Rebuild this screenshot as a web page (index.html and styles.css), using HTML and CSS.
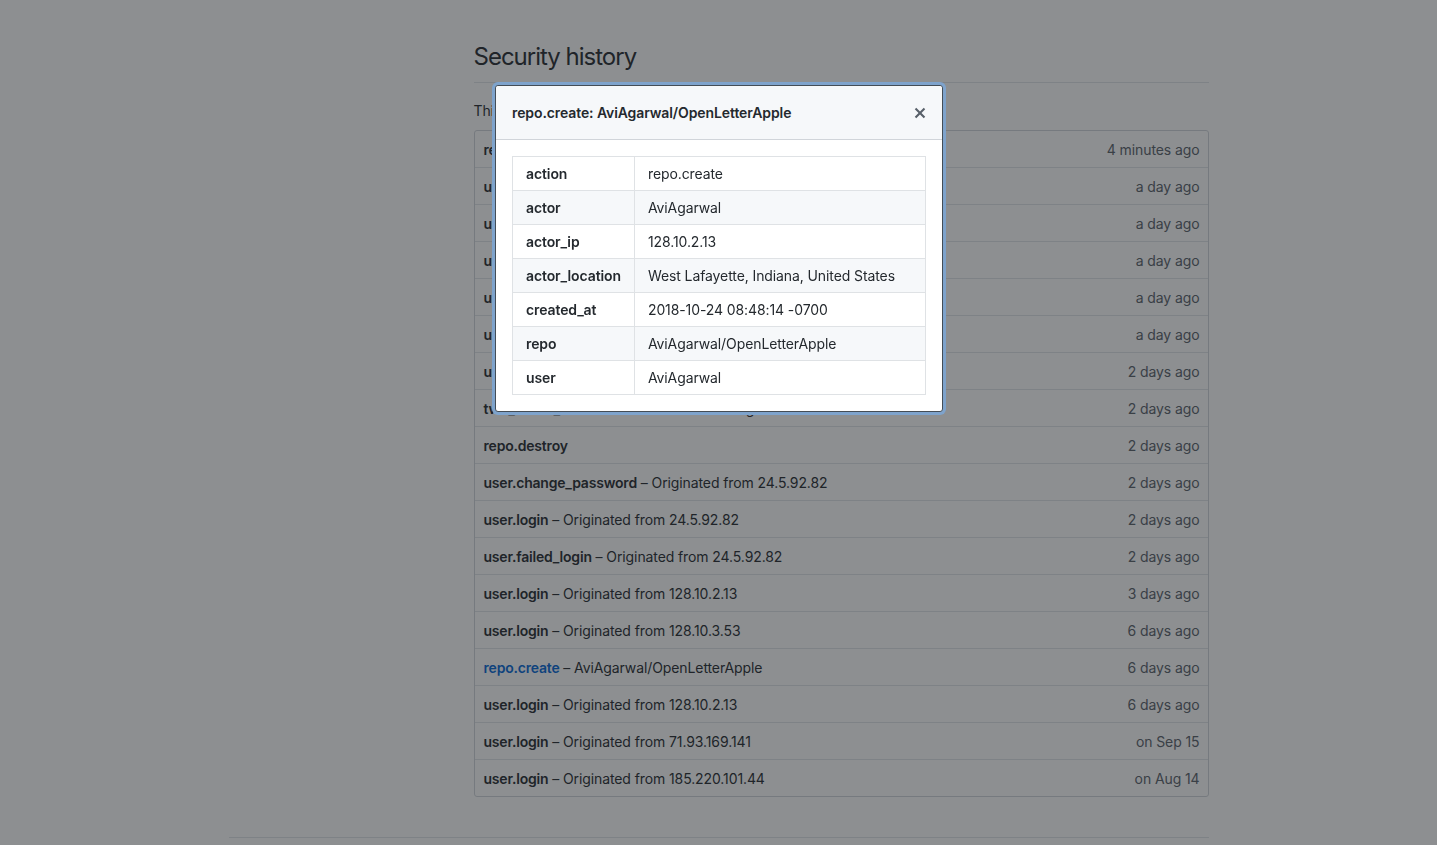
FILE: index.html
```html
<!DOCTYPE html>
<html lang="en">
<head>
<meta charset="utf-8">
<title>Security history</title>
<link rel="stylesheet" href="styles.css">
</head>
<body>
<div class="container">
  <div class="layout">
    <aside class="sidebar"></aside>
    <main class="content">
      <div class="subhead"><h2 class="subhead-title">Security history</h2></div>
      <p class="intro">This is a security log of activities involving your account.</p>
      <div class="box">
        <div class="row"><span class="desc"><b>repo.create</b> – AviAgarwal/OpenLetterApple</span><span class="time">4 minutes ago</span></div>
        <div class="row"><span class="desc"><b>user.login</b> – Originated from 128.10.2.13</span><span class="time">a day ago</span></div>
        <div class="row"><span class="desc"><b>user.login</b> – Originated from 128.10.2.13</span><span class="time">a day ago</span></div>
        <div class="row"><span class="desc"><b>user.login</b> – Originated from 128.10.3.53</span><span class="time">a day ago</span></div>
        <div class="row"><span class="desc"><b>user.login</b> – Originated from 128.10.2.13</span><span class="time">a day ago</span></div>
        <div class="row"><span class="desc"><b>user.login</b> – Originated from 24.5.92.82</span><span class="time">a day ago</span></div>
        <div class="row"><span class="desc"><b>user.login</b> – Originated from 24.5.92.82</span><span class="time">2 days ago</span></div>
        <div class="row"><span class="desc"><b>two_factor_authentication.enabled</b> – Originated from 24.5.92.82</span><span class="time">2 days ago</span></div>
        <div class="row"><span class="desc"><b>repo.destroy</b></span><span class="time">2 days ago</span></div>
        <div class="row"><span class="desc"><b>user.change_password</b> – Originated from 24.5.92.82</span><span class="time">2 days ago</span></div>
        <div class="row"><span class="desc"><b>user.login</b> – Originated from 24.5.92.82</span><span class="time">2 days ago</span></div>
        <div class="row"><span class="desc"><b>user.failed_login</b> – Originated from 24.5.92.82</span><span class="time">2 days ago</span></div>
        <div class="row"><span class="desc"><b>user.login</b> – Originated from 128.10.2.13</span><span class="time">3 days ago</span></div>
        <div class="row"><span class="desc"><b>user.login</b> – Originated from 128.10.3.53</span><span class="time">6 days ago</span></div>
        <div class="row"><span class="desc"><a class="link" href="#">repo.create</a> – AviAgarwal/OpenLetterApple</span><span class="time">6 days ago</span></div>
        <div class="row"><span class="desc"><b>user.login</b> – Originated from 128.10.2.13</span><span class="time">6 days ago</span></div>
        <div class="row"><span class="desc"><b>user.login</b> – Originated from 71.93.169.141</span><span class="time">on Sep 15</span></div>
        <div class="row"><span class="desc"><b>user.login</b> – Originated from 185.220.101.44</span><span class="time">on Aug 14</span></div>
      </div>
    </main>
  </div>
  <footer class="footer"></footer>
</div>

<div class="backdrop"></div>

<div class="modal" role="dialog">
  <div class="modal-header">
    <h3 class="modal-title">repo.create: AviAgarwal/OpenLetterApple</h3>
    <button class="close" aria-label="Close">
      <svg width="12" height="16" viewBox="0 0 12 16"><path fill="currentColor" d="M7.48 8l3.75 3.75-1.48 1.48L6 9.48l-3.75 3.75-1.48-1.48L4.52 8 .77 4.25l1.48-1.48L6 6.52l3.75-3.75 1.48 1.48L7.48 8z"/></svg>
    </button>
  </div>
  <div class="modal-body">
    <table class="details">
      <tr><th>action</th><td>repo.create</td></tr>
      <tr><th>actor</th><td>AviAgarwal</td></tr>
      <tr><th>actor_ip</th><td>128.10.2.13</td></tr>
      <tr><th>actor_location</th><td>West Lafayette, Indiana, United States</td></tr>
      <tr><th>created_at</th><td>2018-10-24 08:48:14 -0700</td></tr>
      <tr><th>repo</th><td>AviAgarwal/OpenLetterApple</td></tr>
      <tr><th>user</th><td>AviAgarwal</td></tr>
    </table>
  </div>
</div>
</body>
</html>
```

FILE: styles.css
```css
* { box-sizing: border-box; }

html, body {
  margin: 0;
  padding: 0;
  background: #fff;
  color: #24292e;
  font-family: Inter, "Noto Sans", "Liberation Sans", sans-serif;
  font-size: 14px;
  line-height: 1.5;
  letter-spacing: -0.1px;
}

.container {
  width: 980px;
  margin: 0 auto;
}

.layout {
  display: grid;
  grid-template-columns: 245px 735px;
}

.content {
  padding-top: 42px;
}

.subhead {
  border-bottom: 1px solid #e1e4e8;
  padding-bottom: 10px;
  margin-bottom: 16px;
}

.subhead-title {
  margin: 0;
  font-size: 24px;
  font-weight: 400;
  line-height: 30px;
  letter-spacing: -1px;
}

.intro {
  margin: 0 0 10px;
  line-height: 21px;
  padding-top: 1px;
  height: 21px;
}

.box {
  border: 1px solid #d1d5da;
  border-radius: 3px;
}

.row {
  display: flex;
  justify-content: space-between;
  align-items: center;
  padding: 9px 8px 7px 9px;
  line-height: 20px;
  border-top: 1px solid #e1e4e8;
  white-space: nowrap;
}

.row:first-child { border-top: 0; }

.desc b { font-weight: 600; letter-spacing: -0.2px; }

.link {
  color: #0366d6;
  font-weight: 600;
  letter-spacing: -0.2px;
  text-decoration: none;
}

.time { color: #586069; }

.footer {
  margin-top: 40px;
  border-top: 1px solid #e1e4e8;
  height: 8px;
}

.backdrop {
  position: fixed;
  inset: 0;
  background: rgba(27, 31, 35, 0.5);
  z-index: 10;
}

.modal {
  position: absolute;
  left: 495px;
  top: 85px;
  width: 448px;
  background: #fff;
  border: 1px solid #444d56;
  border-radius: 3px;
  box-shadow: 0 0 0 3px #7ea3cc;
  z-index: 20;
}

.modal-header {
  display: flex;
  justify-content: space-between;
  align-items: center;
  padding: 16px;
  background: #f6f8fa;
  border-bottom: 1px solid #d1d5da;
  border-radius: 3px 3px 0 0;
}

.modal-title {
  margin: 0;
  font-size: 14px;
  font-weight: 600;
  line-height: 21px;
  letter-spacing: -0.1px;
}

.close {
  border: 0;
  background: none;
  padding: 0;
  margin: 0;
  color: #586069;
  display: flex;
  cursor: pointer;
}

.modal-body {
  padding: 16px;
}

.details {
  width: 100%;
  border-collapse: collapse;
}

.details th,
.details td {
  border: 1px solid #dfe2e5;
  padding: 6px 13px;
  text-align: left;
  line-height: 21px;
}

.details th {
  width: 120px;
  font-weight: 600;
}

.details td { font-weight: 400; }

.details tr:nth-child(2n) { background: #f6f8fa; }
```
